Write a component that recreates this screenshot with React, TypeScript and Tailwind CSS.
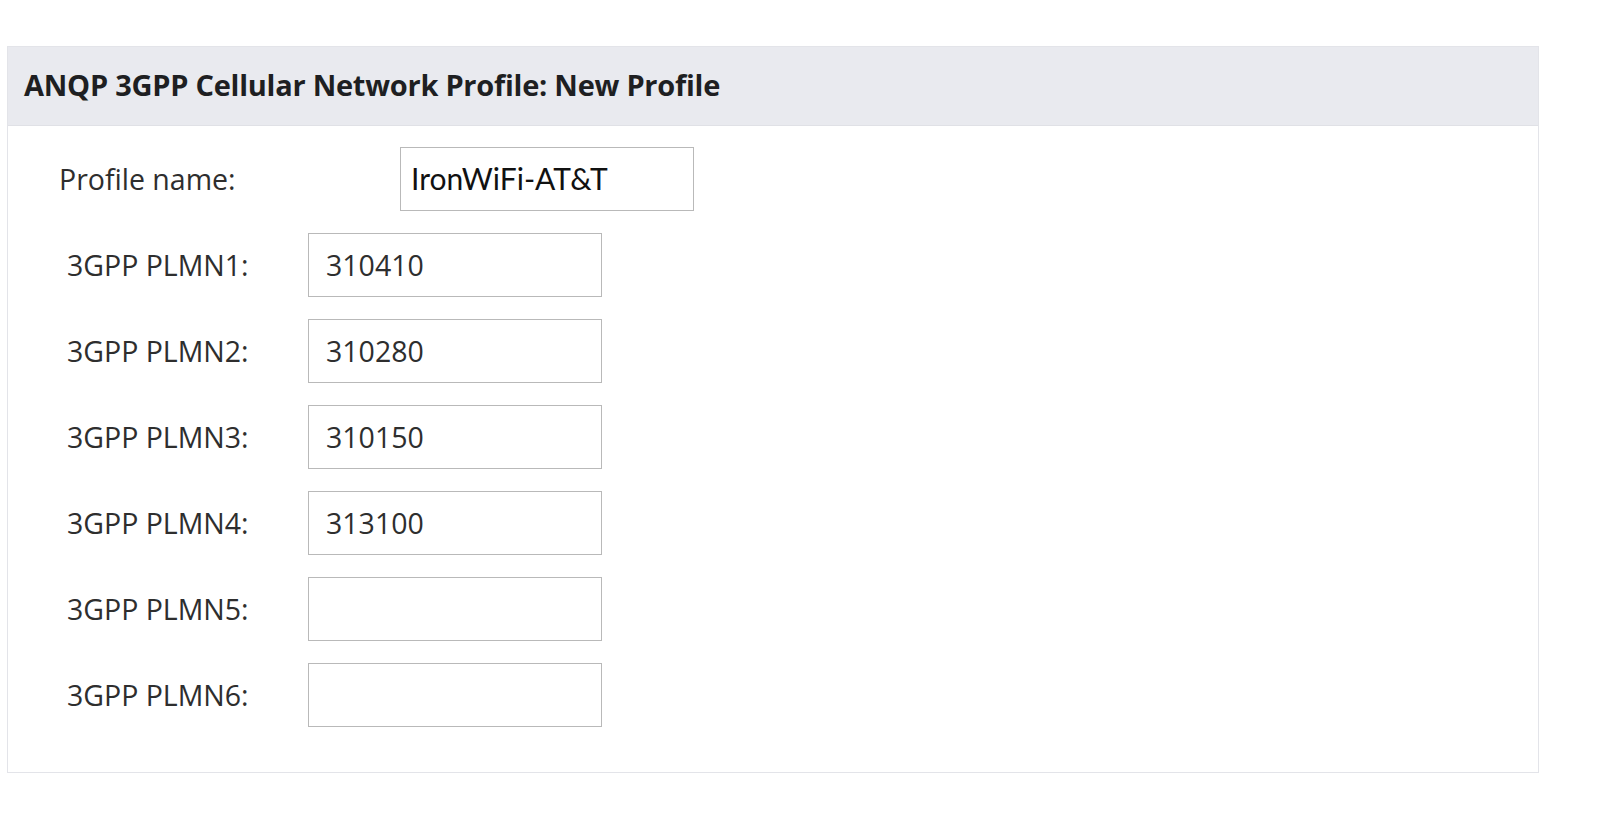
const plmns = [
  { label: '3GPP PLMN1:', value: '310410' },
  { label: '3GPP PLMN2:', value: '310280' },
  { label: '3GPP PLMN3:', value: '310150' },
  { label: '3GPP PLMN4:', value: '313100' },
  { label: '3GPP PLMN5:', value: '' },
  { label: '3GPP PLMN6:', value: '' },
];

export default function App() {
  return (
    <div className="min-h-screen w-full bg-white pt-[46px] pl-[7px]" style={{ fontFamily: '"Open Sans", "Noto Sans", sans-serif' }}>
      <div className="w-[1532px] border border-[#e3e4e9] bg-white">
        {/* Header */}
        <div className="h-[79px] flex items-center bg-[#e9eaef] border-b border-[#e0e1e6] pl-[16px] pb-[2px]">
          <h2 className="text-[29px] font-bold text-[#1e1f22] tracking-[-0.25px]">
            ANQP 3GPP Cellular Network Profile: New Profile
          </h2>
        </div>

        {/* Form */}
        <div className="flex flex-col gap-[22px] pt-[21px] pb-[45px]">
          <div className="flex items-center">
            <label className="w-[392px] pl-[51px] text-[28.5px] text-[#2e2e2e]">Profile name:</label>
            <div className="w-[294px] h-[64px] border border-[#b9b9b9] flex items-center pl-[10px] pb-[1px]">
              <span className="text-[30px] text-[#111]" style={{ fontFamily: 'Lato, sans-serif' }}>IronWiFi-AT&amp;T</span>
            </div>
          </div>

          {plmns.map((p) => (
            <div key={p.label} className="flex items-center">
              <label className="w-[300px] pl-[59px] text-[28.5px] text-[#2e2e2e]">{p.label}</label>
              <div className="w-[294px] h-[64px] border border-[#b9b9b9] flex items-center pl-[17px]">
                <span className="text-[28.5px] text-[#2e2e2e]">{p.value}</span>
              </div>
            </div>
          ))}
        </div>
      </div>
    </div>
  );
}
